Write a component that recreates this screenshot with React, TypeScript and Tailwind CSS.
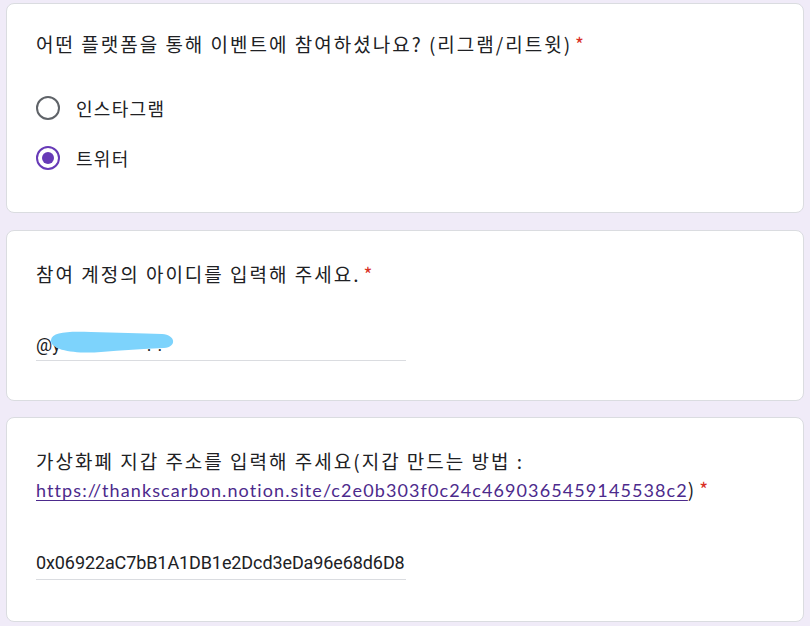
import React from "react";

const kr = "font-['Noto_Sans_CJK_KR','Noto_Sans',sans-serif]";

function Star() {
  return <span className="ml-[3px] text-[#d93025]">*</span>;
}

function Radio({ checked }: { checked?: boolean }) {
  return (
    <span
      className={`flex h-[24px] w-[24px] shrink-0 items-center justify-center rounded-full border-[2px] ${
        checked ? "border-[#673ab7]" : "border-[#5f6368]"
      }`}
    >
      {checked && <span className="h-[12px] w-[12px] rounded-full bg-[#673ab7]" />}
    </span>
  );
}

function Card({ children, className }: { children: React.ReactNode; className?: string }) {
  return (
    <section className={`rounded-[8px] border border-[#dadce0] bg-white px-[29px] ${className ?? ""}`}>
      {children}
    </section>
  );
}

export default function App() {
  return (
    <main className={`min-h-screen bg-[#f0ebf8] px-[6px] pt-[3px] pb-[6px] text-[#202124] ${kr}`}>
      {/* platform question */}
      <Card className="pt-[26px] pb-[29px]">
        <h2 className="text-[19px] leading-[27px] tracking-[2px]">
          어떤 플랫폼을 통해 이벤트에 참여하셨나요? (리그램/리트윗)
          <Star />
        </h2>
        <div className="mt-[26px] flex flex-col">
          <label className="flex h-[50px] items-center gap-[16px]">
            <Radio />
            <span className="text-[18px] tracking-[1.3px]">인스타그램</span>
          </label>
          <label className="flex h-[50px] items-center gap-[16px]">
            <Radio checked />
            <span className="text-[18px] tracking-[1.3px]">트위터</span>
          </label>
        </div>
      </Card>

      {/* account id */}
      <Card className="mt-[17px] pt-[29px] pb-[39px]">
        <h2 className="text-[19px] leading-[27px] tracking-[2px]">
          참여 계정의 아이디를 입력해 주세요.
          <Star />
        </h2>
        <div className="relative mt-[42px] flex h-[32px] w-[370px] items-center border-b border-[#dadce0] font-['Roboto',sans-serif] text-[18px]">
          <span>@y</span>
          <span className="ml-[86px] tracking-[6px]">..</span>
          <svg
            className="absolute left-0 top-0"
            width="180"
            height="32"
            viewBox="0 0 180 32"
          >
            <path
              d="M15,11 C16,3 32,2 55,3 C80,4 105,4 126,5 C140,6 141,18 128,19 C106,20 86,21 65,23 C42,25 14,22 15,11 Z"
              fill="#7dd3fc"
            />
          </svg>
        </div>
      </Card>

      {/* wallet address */}
      <Card className="mt-[16px] pt-[29px] pb-[41px]">
        <h2 className="text-[19px] leading-[28px] tracking-[2px]">
          가상화폐 지갑 주소를 입력해 주세요(지갑 만드는 방법 :
          <br />
          <a
            href="#"
            className="font-['Lato',sans-serif] text-[18px] tracking-[1.1px] text-[#4c2a8c] underline underline-offset-[3px]"
          >
            https://thankscarbon.notion.site/c2e0b303f0c24c4690365459145538c2
          </a>
          )
          <Star />
        </h2>
        <div className="mt-[42px] flex h-[34px] w-[370px] items-center border-b border-[#dadce0] font-['Roboto',sans-serif] text-[18px] tracking-[-0.1px]">
          0x06922aC7bB1A1DB1e2Dcd3eDa96e68d6D8
        </div>
      </Card>
    </main>
  );
}
